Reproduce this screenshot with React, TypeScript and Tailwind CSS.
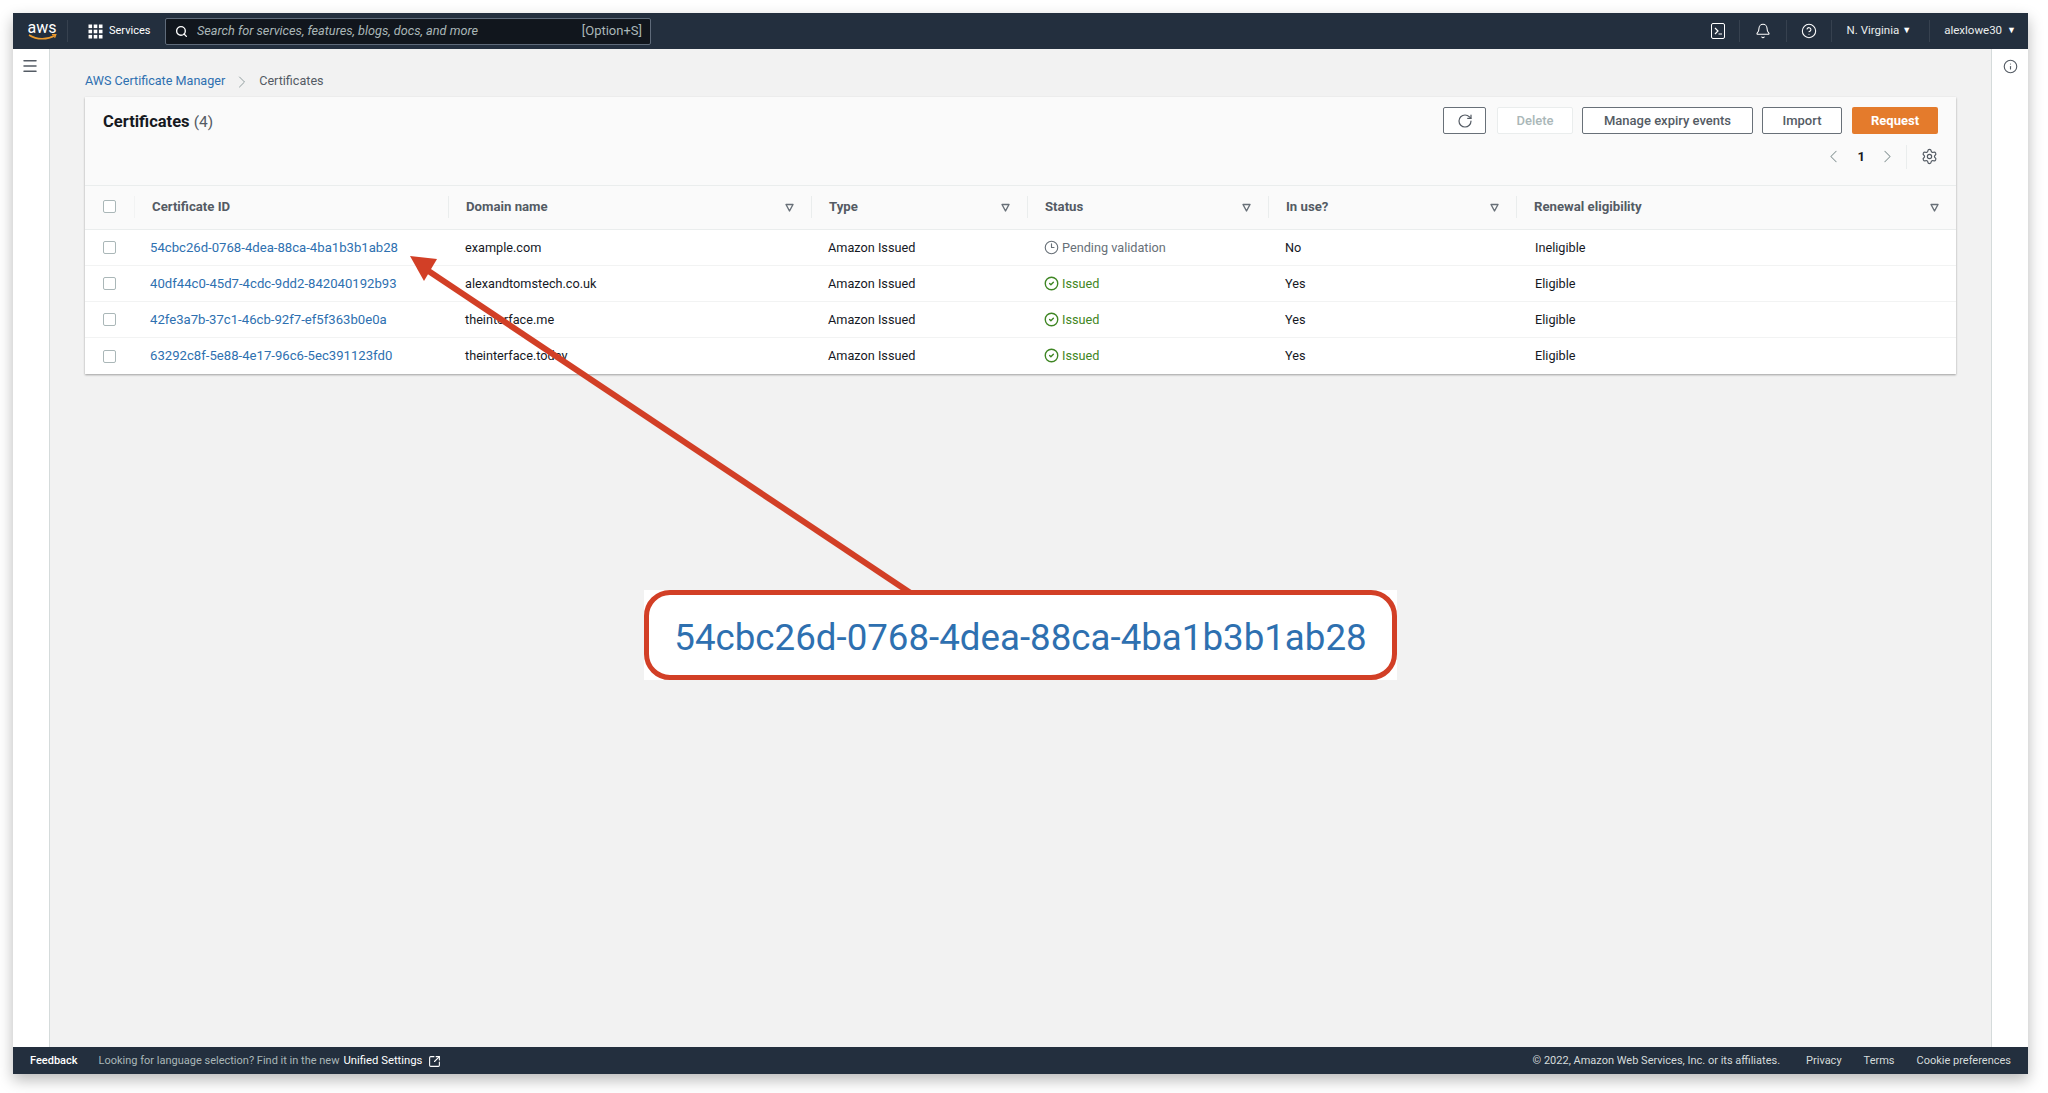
import { Bell, ChevronLeft, ChevronRight, CircleCheck, CircleHelp, Clock3, Info, Menu, RotateCw, Search, Settings, SquareArrowOutUpRight } from "lucide-react";

const rows = [
  { id: "54cbc26d-0768-4dea-88ca-4ba1b3b1ab28", domain: "example.com", status: "Pending validation", inUse: "No", renewal: "Ineligible" },
  { id: "40df44c0-45d7-4cdc-9dd2-842040192b93", domain: "alexandtomstech.co.uk", status: "Issued", inUse: "Yes", renewal: "Eligible" },
  { id: "42fe3a7b-37c1-46cb-92f7-ef5f363b0e0a", domain: "theinterface.me", status: "Issued", inUse: "Yes", renewal: "Eligible" },
  { id: "63292c8f-5e88-4e17-96c6-5ec391123fd0", domain: "theinterface.today", status: "Issued", inUse: "Yes", renewal: "Eligible" },
];

const columns = ["Certificate ID", "Domain name", "Type", "Status", "In use?", "Renewal eligibility"];
const gridCols = "grid grid-cols-[49px_314px_363px_216px_241px_248px_1fr]";

function Checkbox() {
  return <div className="w-[13px] h-[13px] rounded-[2px] border border-[#aab7b8] bg-white"></div>;
}

function SortCaret() {
  return (
    <svg width="9" height="9" viewBox="0 0 9 9" className="shrink-0">
      <path d="M1 1.5h7L4.5 8z" fill="none" stroke="#687078" strokeWidth="1.4" strokeLinejoin="round" />
    </svg>
  );
}

function TopDivider() {
  return <div className="w-px h-[22px] bg-[#36414f]"></div>;
}

function Header() {
  return (
    <div className="h-[36px] shrink-0 bg-[#232f3e] flex items-center text-white text-[11.5px]">
      <div className="w-[54px] flex flex-col items-center pl-[4px] leading-none">
        <span className="text-[16px] leading-[13px] text-white">aws</span>
        <svg width="29" height="7" viewBox="0 0 29 7">
          <path d="M1 1c8 5 18 5 26 .5" fill="none" stroke="#ec9a2d" strokeWidth="1.5" />
          <path d="M24 .6l4-.4-1.4 3.6" fill="none" stroke="#ec9a2d" strokeWidth="1.2" />
        </svg>
      </div>
      <div className="w-px h-[22px] bg-[#36414f]"></div>
      <div className="flex items-center gap-[6px] pl-[20px] w-[95px] text-[11px]">
        <svg width="15" height="15" viewBox="0 0 15 15" fill="#ffffff" className="shrink-0">
          <rect x="0.5" y="0.5" width="3.6" height="3.6" />
          <rect x="5.7" y="0.5" width="3.6" height="3.6" />
          <rect x="10.9" y="0.5" width="3.6" height="3.6" />
          <rect x="0.5" y="5.7" width="3.6" height="3.6" />
          <rect x="5.7" y="5.7" width="3.6" height="3.6" />
          <rect x="10.9" y="5.7" width="3.6" height="3.6" />
          <rect x="0.5" y="10.9" width="3.6" height="3.6" />
          <rect x="5.7" y="10.9" width="3.6" height="3.6" />
          <rect x="10.9" y="10.9" width="3.6" height="3.6" />
        </svg>
        <span>Services</span>
      </div>
      <div className="w-[486px] h-[27px] ml-[2px] bg-[#11161d] border border-[#5f6b7a] rounded-[2px] flex items-center pl-[9px] pr-[8px] text-[12.7px] text-[#aab7b8]">
        <Search size={13} strokeWidth={2.5} className="text-white shrink-0" />
        <span className="italic ml-[9px] flex-1">Search for services, features, blogs, docs, and more</span>
        <span className="text-[13px]">[Option+S]</span>
      </div>
      <div className="flex-1"></div>
      <div className="flex items-center">
        <div className="w-[14px] h-[16px] border-[1.5px] border-white rounded-[2px] flex items-center justify-center text-[9px] leading-none font-medium">
          <svg width="10" height="10" viewBox="0 0 10 10"><path d="M2 2l3 3-3 3M5.5 8H9" fill="none" stroke="#fff" strokeWidth="1.2" /></svg>
        </div>
        <div className="ml-[14px]"><TopDivider /></div>
        <Bell size={16} strokeWidth={1.6} className="mx-[15px]" />
        <TopDivider />
        <CircleHelp size={16} strokeWidth={1.6} className="mx-[14px]" />
        <TopDivider />
        <span className="ml-[15px] text-[#eaeded]">N. Virginia</span>
        <span className="ml-[3px] text-[9px]">▼</span>
        <div className="ml-[18px]"><TopDivider /></div>
        <span className="ml-[14px] text-[#eaeded]">alexlowe30</span>
        <span className="ml-[5px] mr-[12px] text-[9px]">▼</span>
      </div>
    </div>
  );
}

function Toolbar() {
  const btn = "h-[27px] rounded-[2px] border border-[#687078] bg-white flex items-center justify-center text-[13px] font-medium text-[#545b64]";
  return (
    <div className="h-[89px] border-b border-[#eaeded] flex flex-col">
      <div className="flex items-center justify-between pt-[10px] pl-[18px] pr-[18px]">
        <div className="text-[16.5px] font-bold text-[#16191f] pt-[3px]">
          Certificates <span className="font-normal text-[15.5px] text-[#545b64]">(4)</span>
        </div>
        <div className="flex items-center">
          <div className={`${btn} w-[43px]`}><RotateCw size={16} strokeWidth={1.8} className="text-[#545b64]" /></div>
          <div className="ml-[11px] w-[76px] h-[27px] rounded-[2px] border border-[#eaeded] bg-white flex items-center justify-center text-[13px] font-medium text-[#aab7b8]">Delete</div>
          <div className={`${btn} ml-[9px] w-[171px]`}>Manage expiry events</div>
          <div className={`${btn} ml-[9px] w-[80px]`}>Import</div>
          <div className="ml-[10px] w-[86px] h-[27px] rounded-[2px] bg-[#e47b2c] flex items-center justify-center text-[13px] font-bold text-white">Request</div>
        </div>
      </div>
      <div className="flex items-center justify-end mt-[10px] pr-[18px] text-[#687078]">
        <ChevronLeft size={21} strokeWidth={1.2} className="text-[#879596]" />
        <span className="ml-[14px] mr-[12px] text-[13px] font-bold text-[#16191f]">1</span>
        <ChevronRight size={21} strokeWidth={1.2} className="text-[#879596]" />
        <div className="w-px h-[24px] bg-[#eaeded] ml-[8px] mr-[14px]"></div>
        <Settings size={17} strokeWidth={1.7} className="text-[#545b64]" />
      </div>
    </div>
  );
}

function CertTable() {
  return (
    <div className="text-[12.7px]">
      <div className={`${gridCols} h-[44px] items-center bg-[#fafafa] border-b border-[#eaeded] text-[13.2px] font-bold text-[#545b64]`}>
        <div className="flex justify-center pb-[2px] pr-[1px]"><Checkbox /></div>
        {columns.map((name, i) => (
          <div key={name} className={`h-[22px] mb-[1px] flex items-center justify-between pl-[17px] pr-[17px] ${i === 0 ? "border-l border-[#f2f3f3]" : "border-l border-[#eaeded]"}`}>
            <span>{name}</span>
            {i > 0 && <SortCaret />}
          </div>
        ))}
      </div>
      {rows.map((row, i) => (
        <div key={row.id} className={`${gridCols} h-[36px] items-center bg-white text-[#16191f] ${i < 3 ? "border-b border-[#f2f3f3]" : ""}`}>
          <div className="flex justify-center pr-[1px]"><Checkbox /></div>
          <a className="pl-[16px] text-[13.15px] text-[#2e70b0]">{row.id}</a>
          <div className="pl-[17px]">{row.domain}</div>
          <div className="pl-[17px]">Amazon Issued</div>
          <div className={`pl-[17px] flex items-center gap-[3px] ${row.status === "Issued" ? "text-[#3f8624]" : "text-[#687078]"}`}>
            {row.status === "Issued" ? <CircleCheck size={15} strokeWidth={2.2} /> : <Clock3 size={15} strokeWidth={1.8} />}
            <span>{row.status}</span>
          </div>
          <div className="pl-[17px]">{row.inUse}</div>
          <div className="pl-[19px]">{row.renewal}</div>
        </div>
      ))}
    </div>
  );
}

function Footer() {
  return (
    <div className="h-[27px] shrink-0 bg-[#232f3e] flex items-center pt-[1px] pl-[17px] pr-[17px] text-[11px] text-[#d5dbdb]">
      <span className="text-white font-medium">Feedback</span>
      <span className="ml-[21px] text-[#aab7b8]">Looking for language selection? Find it in the new</span>
      <span className="ml-[4px] text-[11.3px] text-white">Unified Settings</span>
      <SquareArrowOutUpRight size={13} strokeWidth={2} className="ml-[6px] text-white" />
      <div className="flex-1"></div>
      <span>© 2022, Amazon Web Services, Inc. or its affiliates.</span>
      <span className="ml-[26px]">Privacy</span>
      <span className="ml-[22px]">Terms</span>
      <span className="ml-[22px]">Cookie preferences</span>
    </div>
  );
}

export default function App() {
  return (
    <div className="relative w-full h-screen overflow-hidden bg-white pt-[13px] pl-[13px] pr-[20px] pb-[19px] font-['Roboto',sans-serif]">
      <div className="w-full h-full flex flex-col shadow-[0_6px_14px_rgba(0,0,0,0.28)]">
        <Header />
        <div className="flex-1 flex min-h-0">
          <div className="w-[37px] bg-white border-r border-[#d5dbdb] flex justify-center pt-[8px] pr-[2px]">
            <Menu size={18} strokeWidth={2} className="text-[#545b64]" />
          </div>
          <div className="flex-1 bg-[#f2f2f2] pl-[35px] pr-[35px]">
            <div className="h-[48px] flex items-center text-[12.6px] pt-[17px]">
              <a className="text-[#2e70b0]">AWS Certificate Manager</a>
              <ChevronRight size={20} strokeWidth={1.1} className="mx-[7px] text-[#879596]" />
              <span className="text-[#545b64]">Certificates</span>
            </div>
            <div className="bg-[#fafafa] shadow-[0_1px_2px_rgba(0,0,0,0.35)]">
              <Toolbar />
              <CertTable />
            </div>
          </div>
          <div className="w-[37px] bg-white border-l border-[#d5dbdb] flex justify-center pt-[10px]">
            <Info size={15} strokeWidth={1.8} className="text-[#545b64]" />
          </div>
        </div>
        <Footer />
      </div>

      {/* annotation: arrow + zoomed id */}
      <svg width="2048" height="1093" viewBox="0 0 2048 1093" className="absolute left-0 top-0 pointer-events-none">
        <path d="M912 594L424 268" stroke="#d23f26" strokeWidth="6" fill="none" />
        <path d="M410 256L437 259 424 281z" fill="#d23f26" />
      </svg>
      <div className="absolute left-[644px] top-[590px] w-[753px] h-[90px] bg-white">
        <div className="w-full h-full rounded-[26px] border-[5px] border-[#d23f26] flex items-center justify-center pt-[6px] text-[36.7px] text-[#2e70b0]">
          54cbc26d-0768-4dea-88ca-4ba1b3b1ab28
        </div>
      </div>
    </div>
  );
}
